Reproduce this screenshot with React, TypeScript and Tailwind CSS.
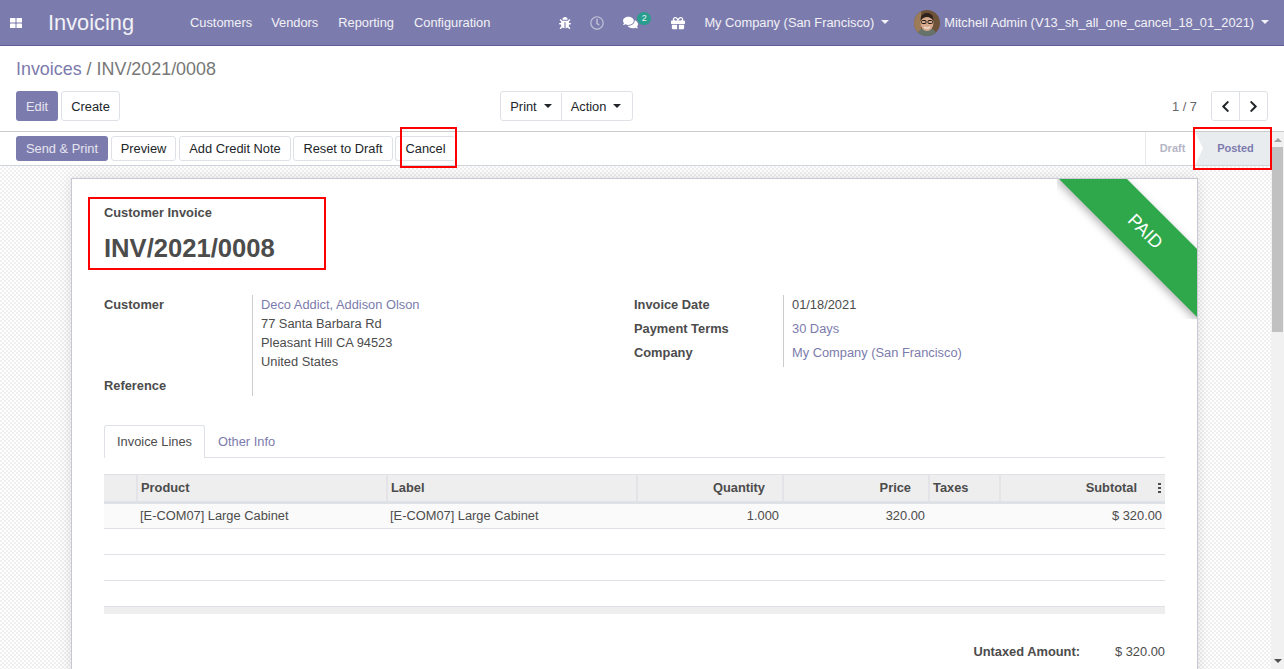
import React from "react";
import { FaBug, FaRegClock, FaComments, FaGift, FaChevronLeft, FaChevronRight } from "react-icons/fa";

const Caret = () => (
  <span className="ml-[7px] inline-block h-0 w-0 border-x-[4.5px] border-t-[4px] border-x-transparent border-t-current align-[3px]" />
);

const Avatar = () => (
  <svg viewBox="0 0 26 26" className="h-[26px] w-[26px] rounded-full">
    <rect width="26" height="26" fill="#6e5238" />
    <rect x="0" y="0" width="7" height="26" fill="#9c7c58" />
    <path d="M3 26c1-6 5-8 10-8s9 2 10 8z" fill="#66736a" />
    <ellipse cx="13" cy="13" rx="6.500" ry="8" fill="#d8a98c" />
    <path d="M6.500 11c0-6 3-8 6.500-8s6.500 2 6.500 8c-2-3-4-4-6.500-4s-4.500 1-6.500 4z" fill="#2e221b" />
    <rect x="7.500" y="10.500" width="4.500" height="3" rx="1" fill="none" stroke="#1f1a18" strokeWidth="1" />
    <rect x="14" y="10.500" width="4.500" height="3" rx="1" fill="none" stroke="#1f1a18" strokeWidth="1" />
    <path d="M10 17c2 1.500 4 1.500 6 0" stroke="#f4e8df" strokeWidth="1.200" fill="none" />
  </svg>
);

const GridIcon = () => (
  <svg viewBox="0 0 12 10" className="h-[10px] w-[12px] fill-white">
    <rect x="0" y="0" width="5.500" height="4.500" rx="0.600" />
    <rect x="6.500" y="0" width="5.500" height="4.500" rx="0.600" />
    <rect x="0" y="5.500" width="5.500" height="4.500" rx="0.600" />
    <rect x="6.500" y="5.500" width="5.500" height="4.500" rx="0.600" />
  </svg>
);

const Btn = ({ children, className = "" }: { children: React.ReactNode; className?: string }) => (
  <button className={`rounded-[3px] border border-[#dee2e6] bg-white text-[#212529] ${className}`}>{children}</button>
);

const Row = ({ shade, children }: { shade?: boolean; children?: React.ReactNode }) => (
  <tr className={`h-[26px] border-b border-[#dee2e6] ${shade ? "bg-[#fafafa]" : "bg-white"}`}>{children}</tr>
);

export default function App() {
  return (
    <div className="flex h-screen w-full flex-col overflow-hidden bg-white font-['Liberation_Sans',Arial,sans-serif] text-[12.85px] text-[#4c4c4c]">
      <nav className="flex h-[46px] shrink-0 items-center whitespace-nowrap border-b border-[#5f5e97] bg-[#7c7bad] text-white/90">
        <div className="ml-[10px]"><GridIcon /></div>
        <span className="ml-[26px] text-[21.8px] leading-none text-white/90">Invoicing</span>
        <a className="ml-[56px]">Customers</a>
        <a className="ml-[19px]">Vendors</a>
        <a className="ml-[20px]">Reporting</a>
        <a className="ml-[20px]">Configuration</a>
        <FaBug className="ml-[69px] text-[12px] text-white" />
        <FaRegClock className="ml-[19px] text-[14px] text-white/50" />
        <div className="relative ml-[19px]">
          <FaComments className="block text-[15px] text-white" />
          <span className="absolute -top-[3px] left-[14px] flex h-[13px] w-[14px] items-center justify-center rounded-full bg-[#2a9d8f] text-[9px] text-white/90">2</span>
        </div>
        <FaGift className="ml-[33px] text-[14px] text-white" />
        <span className="ml-[19px]">My Company (San Francisco)<Caret /></span>
        <div className="ml-[25px]"><Avatar /></div>
        <span className="ml-[4px]">Mitchell Admin (V13_sh_all_one_cancel_18_01_2021)<Caret /></span>
      </nav>

      <header className="flex h-[85px] shrink-0 flex-col px-[16px]">
        <div className="mt-[13px] text-[17.9px] leading-[21px] text-[#777]">
          <a className="text-[#7c7bad]">Invoices</a> / INV/2021/0008
        </div>
        <div className="mt-[11px] flex items-center">
          <button className="h-[30px] w-[42px] rounded-[3px] bg-[#7c7bad] pt-px text-white/80">Edit</button>
          <Btn className="ml-[3px] h-[30px] w-[59px] pt-px">Create</Btn>
          <div className="ml-[380px] flex h-[30px] w-[133px] rounded-[3px] border border-[#dee2e6] pt-px text-[#212529]">
            <span className="flex w-[61px] items-center justify-center border-r border-[#dee2e6]"><span>Print<Caret /></span></span>
            <span className="flex flex-1 items-center justify-center pr-[2px]"><span>Action<Caret /></span></span>
          </div>
          <span className="ml-auto mr-[14px] pt-px text-[#666]">1 / 7</span>
          <div className="flex h-[30px] w-[57px] rounded-[3px] border border-[#dee2e6] text-[#212529]">
            <span className="flex w-[28px] items-center justify-center border-r border-[#dee2e6]"><FaChevronLeft className="text-[13px]" /></span>
            <span className="flex flex-1 items-center justify-center"><FaChevronRight className="text-[13px]" /></span>
          </div>
        </div>
      </header>

      <div className="relative flex min-h-0 flex-1 border-t border-[#ccc]">
        <div className="flex min-w-0 flex-1 flex-col">
          <div className="flex h-[34px] shrink-0 items-center border-b border-[#ced4da] bg-white pl-[16px]">
            <button className="h-[25px] w-[92px] rounded-[3px] bg-[#7c7bad] text-white/80">Send &amp; Print</button>
            <Btn className="ml-[3px] h-[25px] w-[65px]">Preview</Btn>
            <Btn className="ml-[3px] h-[25px] w-[112px]">Add Credit Note</Btn>
            <Btn className="ml-[2px] h-[25px] w-[100px]">Reset to Draft</Btn>
            <Btn className="ml-[2px] h-[25px] w-[60px] border-r-0">Cancel</Btn>
            <div className="ml-auto flex h-full text-[11px] font-bold">
              <span className="flex w-[50px] items-center justify-center border-l border-[#e9ecef] pl-[4px] text-[#b5b5c5]">Draft</span>
              <span className="flex w-[76px] items-center justify-center bg-[#e9ecef] pl-[5px] text-[#7c7bad] [clip-path:polygon(0_0,100%_0,100%_100%,0_100%,8px_50%)]">Posted</span>
            </div>
          </div>

          <main className="min-h-0 flex-1 overflow-hidden bg-[repeating-conic-gradient(#f0f0f0_0_25%,#ffffff_0_50%)] bg-[length:4px_4px] pl-[71px] pr-[73px] pt-[12px]">
            <section className="relative h-[600px] overflow-hidden border border-[#c8c8d4] bg-white px-[32px] shadow-[0_0_14px_rgba(0,0,0,0.12)]">
              <div className="absolute right-0 top-0 h-[140px] w-[140px] overflow-hidden">
                <div className="absolute left-[-11px] top-[29px] flex h-[48px] w-[200px] rotate-45 items-center justify-center bg-[#2ea84b] pr-[2px] text-[18px] text-white shadow-[0_3px_8px_rgba(0,0,0,0.3)]">
                  PAID
                </div>
              </div>

              <div className="mt-[26px] font-bold leading-[15px]">Customer Invoice</div>
              <h1 className="mt-[12px] text-[25.6px] font-bold leading-[32px]">INV/2021/0008</h1>

              <div className="mt-[31px] flex">
                <div className="w-[530px]">
                  <div className="flex">
                    <div className="flex w-[148px] flex-col justify-between pb-[1px] font-bold">
                      <span className="leading-[19px]">Customer</span>
                      <span className="leading-[19px]">Reference</span>
                    </div>
                    <div className="h-[101px] border-l border-[#ccc] pl-[8px] leading-[19px]">
                      <a className="block text-[#7c7bad]">Deco Addict, Addison Olson</a>
                      <div>77 Santa Barbara Rd</div>
                      <div>Pleasant Hill CA 94523</div>
                      <div>United States</div>
                    </div>
                  </div>
                </div>
                <div className="flex h-[72px]">
                  <div className="flex w-[149px] flex-col font-bold">
                    <span className="leading-[19px]">Invoice Date</span>
                    <span className="mt-[5px] leading-[19px]">Payment Terms</span>
                    <span className="mt-[5px] leading-[19px]">Company</span>
                  </div>
                  <div className="flex flex-col border-l border-[#ccc] pl-[8px]">
                    <span className="leading-[19px]">01/18/2021</span>
                    <a className="mt-[5px] leading-[19px] text-[#7c7bad]">30 Days</a>
                    <a className="mt-[5px] leading-[19px] text-[#7c7bad]">My Company (San Francisco)</a>
                  </div>
                </div>
              </div>

              <div className="mt-[29px] flex h-[33px] border-b border-[#dee2e6]">
                <span className="flex h-[33px] w-[101px] items-center justify-center rounded-t-[3px] border border-b-0 border-[#dee2e6] bg-white">Invoice Lines</span>
                <span className="ml-[13px] flex h-[33px] items-center text-[#7c7bad]">Other Info</span>
              </div>

              <table className="mt-[16px] w-[1061px] table-fixed border-collapse">
                <colgroup>
                  <col className="w-[33px]" />
                  <col className="w-[250px]" />
                  <col className="w-[250px]" />
                  <col className="w-[146px]" />
                  <col className="w-[146px]" />
                  <col className="w-[71px]" />
                  <col className="w-[165px]" />
                </colgroup>
                <thead>
                  <tr className="h-[28px] border-b-[3px] border-t border-[#dee2e6] bg-[#eee] font-bold">
                    <th className="border-r-2 border-[#e4e4e8]" />
                    <th className="border-r-2 border-[#e4e4e8] px-[3px] text-left">Product</th>
                    <th className="border-r-2 border-[#e4e4e8] px-[3px] text-left">Label</th>
                    <th className="border-r-2 border-[#e4e4e8] pr-[17px] text-right">Quantity</th>
                    <th className="border-r-2 border-[#e4e4e8] pr-[17px] text-right">Price</th>
                    <th className="border-r-2 border-[#e4e4e8] px-[3px] text-left">Taxes</th>
                    <th className="pr-[28px] text-right">
                      <span className="relative">
                        Subtotal
                        <span className="absolute -right-[24px] top-[3px] flex h-[10px] flex-col justify-between">
                          <i className="block h-[2px] w-[3px] bg-[#4c4c4c]" />
                          <i className="block h-[2px] w-[3px] bg-[#4c4c4c]" />
                          <i className="block h-[2px] w-[3px] bg-[#4c4c4c]" />
                        </span>
                      </span>
                    </th>
                  </tr>
                </thead>
                <tbody>
                  <Row shade>
                    <td />
                    <td className="px-[3px]">[E-COM07] Large Cabinet</td>
                    <td className="px-[3px]">[E-COM07] Large Cabinet</td>
                    <td className="pr-[4px] text-right">1.000</td>
                    <td className="pr-[4px] text-right">320.00</td>
                    <td />
                    <td className="pr-[3px] text-right">$ 320.00</td>
                  </Row>
                  <Row />
                  <Row shade />
                  <Row />
                </tbody>
              </table>
              <div className="h-[7px] w-[1061px] bg-[#eee]" />

              <div className="mt-[30px] flex w-[1061px] justify-end leading-[15px]">
                <span className="font-bold">Untaxed Amount:</span>
                <span className="ml-[35px]">$ 320.00</span>
              </div>
            </section>
          </main>
        </div>

        <div className="flex w-[13px] shrink-0 flex-col items-center bg-[#f1f1f1]">
          <span className="mt-[6px] h-0 w-0 border-x-[4px] border-b-[4px] border-x-transparent border-b-[#a3a3a3]" />
          <div className="mt-[5px] h-[185px] w-[11px] bg-[#c1c1c1]" />
          <span className="mb-[6px] mt-auto h-0 w-0 border-x-[4px] border-t-[4px] border-x-transparent border-t-[#505050]" />
        </div>

        <div className="pointer-events-none absolute left-[400px] top-[-5px] h-[41px] w-[57px] border-2 border-[#f00]" />
        <div className="pointer-events-none absolute left-[1193px] top-[-5px] h-[43px] w-[79px] border-2 border-[#f00]" />
        <div className="pointer-events-none absolute left-[88px] top-[65px] h-[73px] w-[238px] border-2 border-[#f00]" />
      </div>
    </div>
  );
}
